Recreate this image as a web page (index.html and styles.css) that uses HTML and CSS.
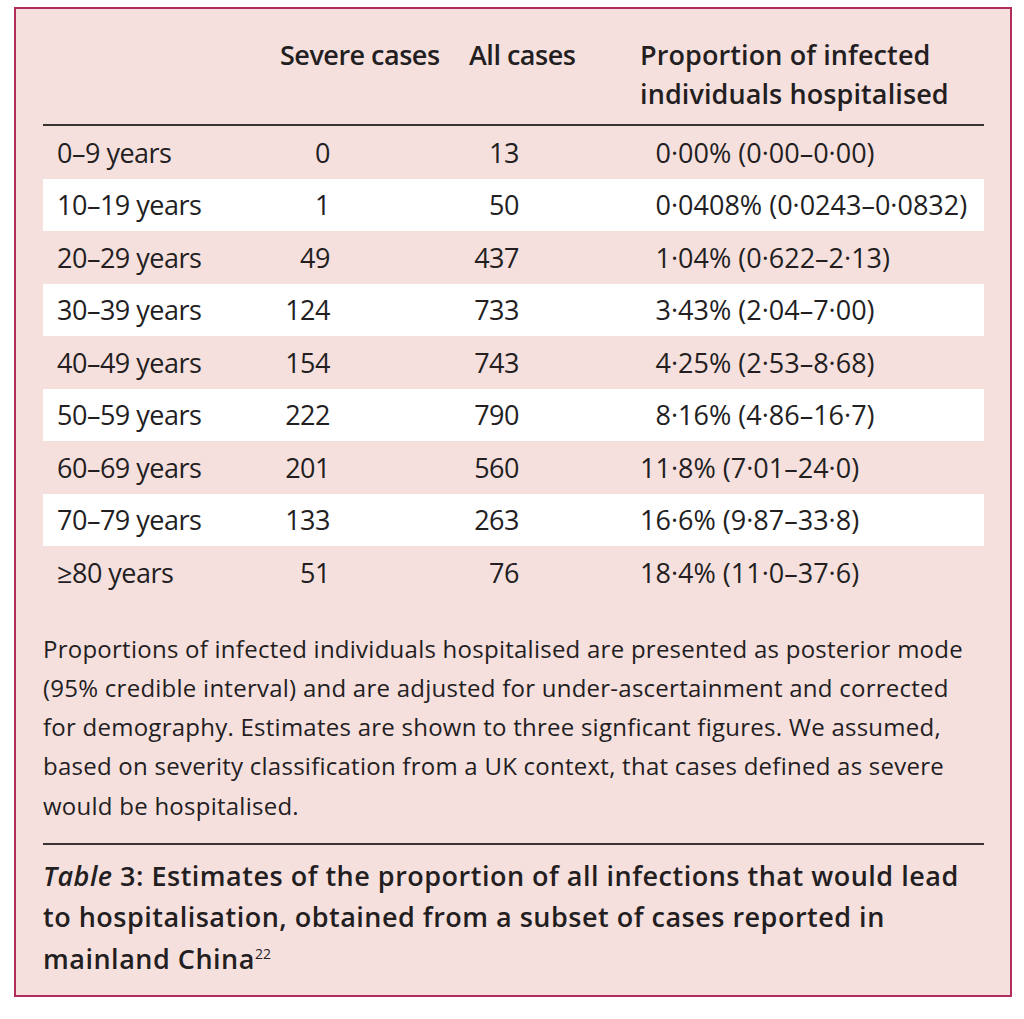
FILE: index.html
```html
<!DOCTYPE html>
<html>
<head>
<meta charset="utf-8">
<link rel="stylesheet" href="styles.css">
</head>
<body>
<div class="panel">
  <div class="table">
    <div class="row head">
      <div class="c1"></div>
      <div class="c2">Severe cases</div>
      <div class="c3">All cases</div>
      <div class="c4">Proportion of infected<br>individuals hospitalised</div>
    </div>
    <div class="row"><div class="c1">0–9 years</div><div class="c2 num">0</div><div class="c3 num">13</div><div class="c4"><span class="int">0</span>·00% (0·00–0·00)</div></div>
    <div class="row alt"><div class="c1">10–19 years</div><div class="c2 num">1</div><div class="c3 num">50</div><div class="c4"><span class="int">0</span>·0408% (0·0243–0·0832)</div></div>
    <div class="row"><div class="c1">20–29 years</div><div class="c2 num">49</div><div class="c3 num">437</div><div class="c4"><span class="int">1</span>·04% (0·622–2·13)</div></div>
    <div class="row alt"><div class="c1">30–39 years</div><div class="c2 num">124</div><div class="c3 num">733</div><div class="c4"><span class="int">3</span>·43% (2·04–7·00)</div></div>
    <div class="row"><div class="c1">40–49 years</div><div class="c2 num">154</div><div class="c3 num">743</div><div class="c4"><span class="int">4</span>·25% (2·53–8·68)</div></div>
    <div class="row alt"><div class="c1">50–59 years</div><div class="c2 num">222</div><div class="c3 num">790</div><div class="c4"><span class="int">8</span>·16% (4·86–16·7)</div></div>
    <div class="row"><div class="c1">60–69 years</div><div class="c2 num">201</div><div class="c3 num">560</div><div class="c4"><span class="int">11</span>·8% (7·01–24·0)</div></div>
    <div class="row alt"><div class="c1">70–79 years</div><div class="c2 num">133</div><div class="c3 num">263</div><div class="c4"><span class="int">16</span>·6% (9·87–33·8)</div></div>
    <div class="row"><div class="c1">≥80 years</div><div class="c2 num">51</div><div class="c3 num">76</div><div class="c4"><span class="int">18</span>·4% (11·0–37·6)</div></div>
  </div>
  <p class="note">Proportions of infected individuals hospitalised are presented as posterior mode<br>(95% credible interval) and are adjusted for under-ascertainment and corrected<br>for demography. Estimates are shown to three signficant figures. We assumed,<br>based on severity classification from a UK context, that cases defined as severe<br>would be hospitalised.</p>
  <p class="caption"><em>Table</em> 3: Estimates of the proportion of all infections that would lead<br>to hospitalisation, obtained from a subset of cases reported in<br>mainland China<sup>22</sup></p>
</div>
</body>
</html>
```
FILE: styles.css
```css
html, body {
  margin: 0;
  padding: 0;
  background: #ffffff;
}
body {
  font-family: "Open Sans", "Noto Sans", sans-serif;
  color: #231e1f;
}
.panel {
  box-sizing: border-box;
  width: 998px;
  height: 990px;
  margin: 7px 0 0 14px;
  border: 2px solid #b12d5b;
  background: #f6e0de;
  padding: 26px 26px 0 27px;
}
.table {
  display: flex;
  flex-direction: column;
}
.row {
  display: grid;
  grid-template-columns: 237px 189px 171px 345px;
  height: 52.5px;
  align-items: center;
  font-size: 27px;
  letter-spacing: -0.5px;
  white-space: nowrap;
}
.row .c4 {
  letter-spacing: 0;
}
.row.alt {
  background: #ffffff;
}
.row.head {
  height: auto;
  align-items: start;
  font-weight: 600;
  line-height: 39px;
  padding-bottom: 11px;
  border-bottom: 2px solid #3a3233;
}
.row.head .c4 {
  letter-spacing: 0.1px;
}
.c1 {
  padding-left: 14px;
}
.num.c2 {
  text-align: right;
  padding-right: 139px;
}
.num.c3 {
  text-align: right;
  padding-right: 121px;
}
.int {
  display: inline-block;
  width: 31px;
  text-align: right;
}
.note {
  margin: 30px 0 0 0;
  font-size: 24px;
  line-height: 39.3px;
  letter-spacing: 0.25px;
  white-space: nowrap;
  padding-bottom: 18px;
  border-bottom: 2px solid #3a3233;
}
.caption {
  margin: 10px 0 0 0;
  font-size: 27px;
  font-weight: 600;
  line-height: 41.5px;
  letter-spacing: 0.5px;
  white-space: nowrap;
}
.caption sup {
  font-size: 14px;
  font-weight: 400;
  line-height: 0;
  letter-spacing: 0;
}
```
